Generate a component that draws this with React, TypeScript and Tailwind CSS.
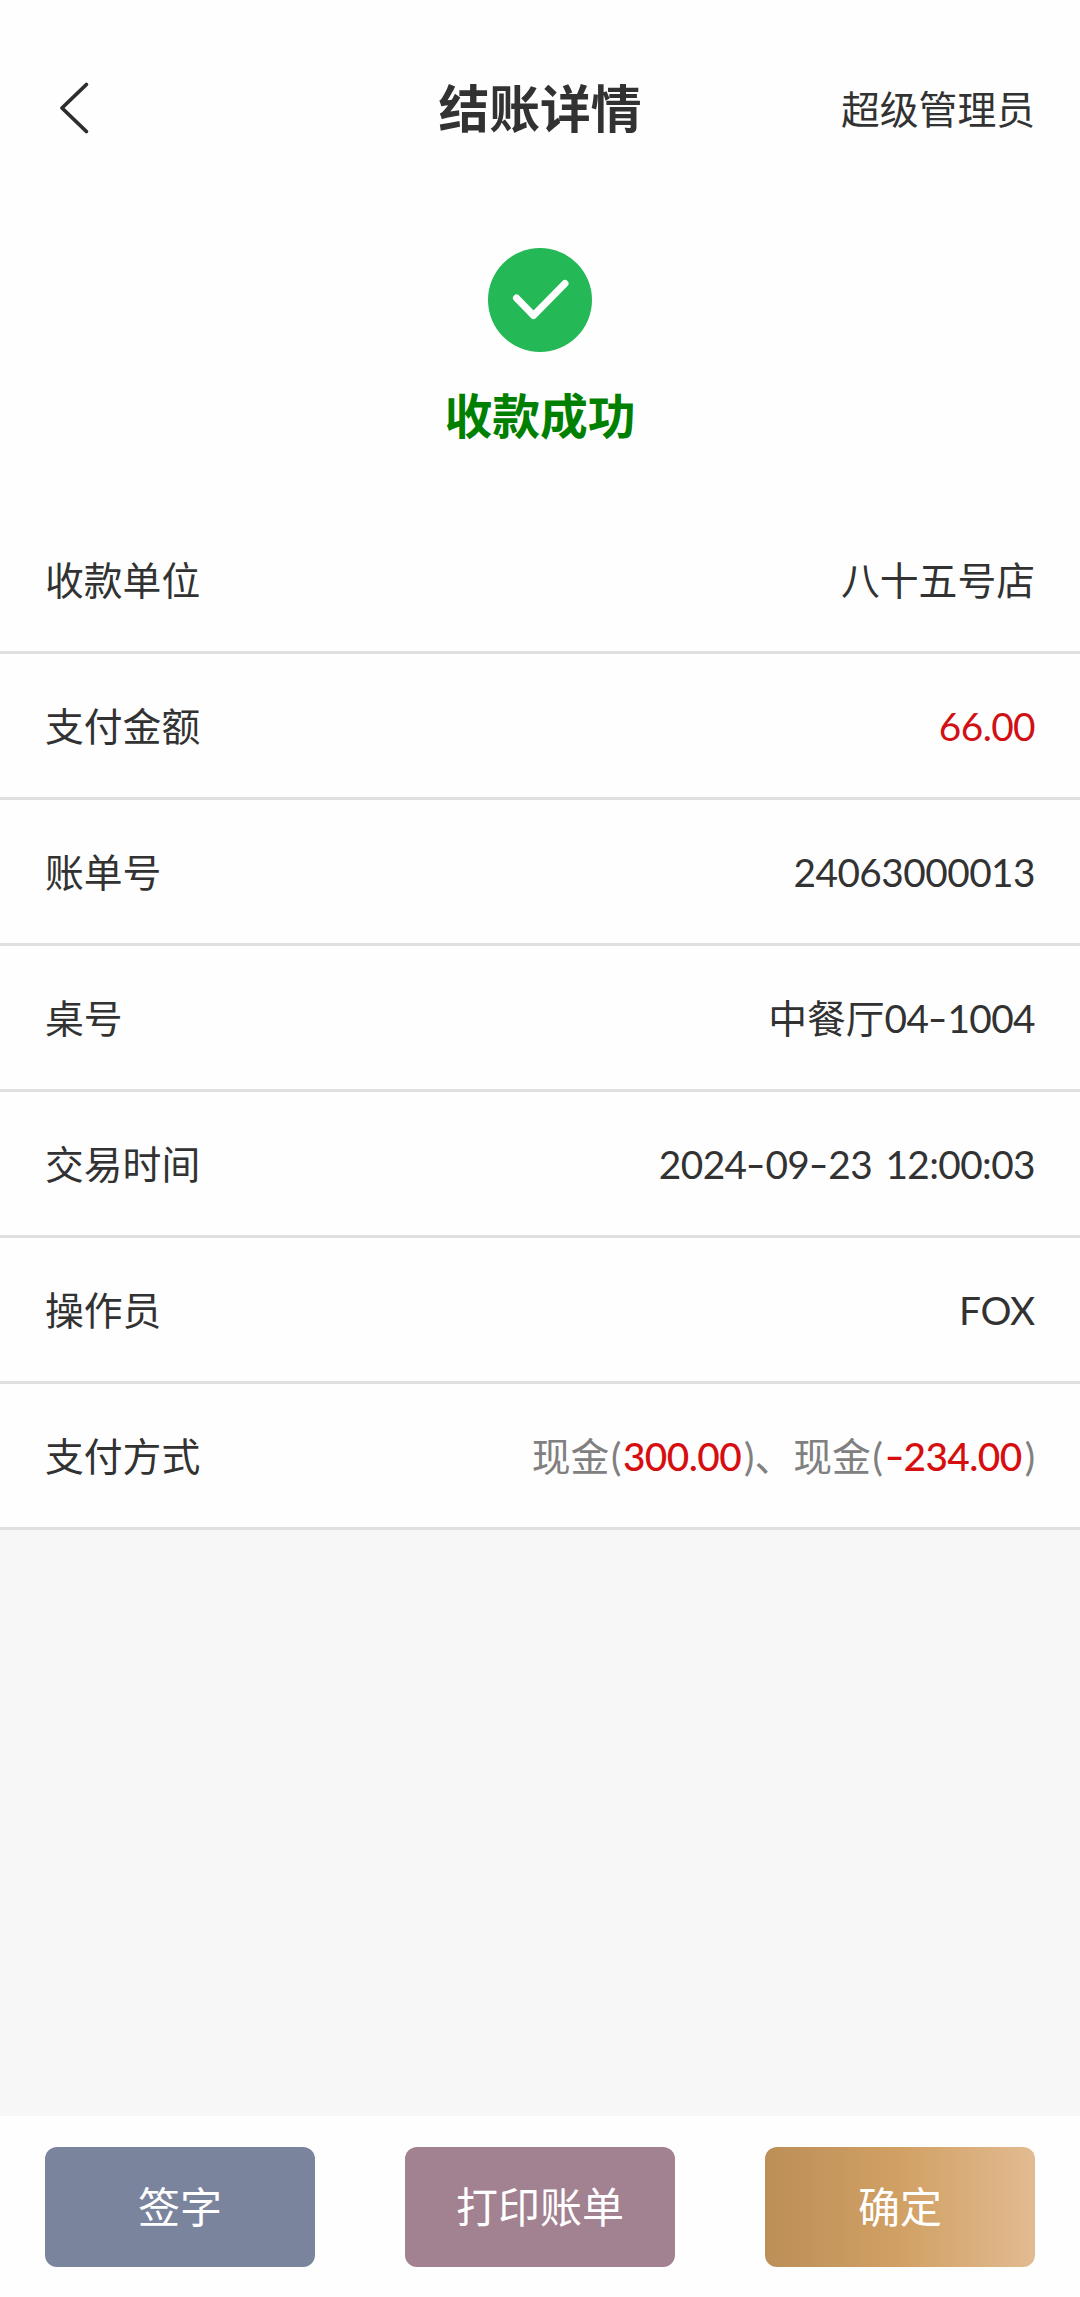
import type { ReactNode } from "react";
import clsx from "clsx";

type Row = {
  label: string;
  value: ReactNode;
  className?: string;
};

// The dash is set wider than the font's own hyphen
function Dash() {
  return <span className="relative -top-px inline-block w-[19px] origin-center scale-x-[1.4] text-center tracking-normal">-</span>;
}

function Payment({ children }: { children: ReactNode }) {
  return (
    <>
      现金<span className="px-[1.7px]">(</span>
      <span className="font-medium tracking-[-0.6px] text-[#d60e10]">{children}</span>
      <span className="pl-[3px]">)</span>
    </>
  );
}

const ROWS: Row[] = [
  { label: "收款单位", value: "八十五号店" },
  { label: "支付金额", value: "66.00", className: "text-[#d01014] tracking-[-0.6px]" },
  { label: "账单号", value: "24063000013", className: "tracking-[-0.55px]" },
  {
    label: "桌号",
    value: (
      <>
        中餐厅
        <span className="tracking-[-0.6px]">
          04
          <Dash />
          1004
        </span>
      </>
    ),
  },
  {
    label: "交易时间",
    value: (
      <>
        2024
        <Dash />
        09
        <Dash />
        23 12:00:03
      </>
    ),
    className: "tracking-[-0.6px] [word-spacing:4px]",
  },
  { label: "操作员", value: "FOX", className: "tracking-[-0.3px]" },
  {
    label: "支付方式",
    value: (
      <>
        <Payment>300.00</Payment>、
        <Payment>
          <Dash />
          234.00
        </Payment>
      </>
    ),
    className: "text-[#808080]",
  },
];

const ACTIONS = [
  { label: "签字", className: "bg-[#7b849d]" },
  { label: "打印账单", className: "bg-[#a28191]" },
  { label: "确定", className: "bg-linear-to-r from-[#bc8f58] via-[#d1a064] to-[#e2bb91]" },
];

function Header() {
  return (
    <header className="grid h-[216px] grid-cols-3 items-center px-[45px]">
      <button type="button" className="justify-self-start" aria-label="返回">
        <svg width="54" height="54" viewBox="0 0 54 54" fill="none" stroke="#2d2d2d" strokeWidth="3.8" strokeLinecap="round" strokeLinejoin="round">
          <path d="M41.4 3.5 17 27l24.4 23.5" />
        </svg>
      </button>
      <h1 className="justify-self-center pt-[3px] text-[50.8px] leading-none font-bold whitespace-nowrap">结账详情</h1>
      <span className="justify-self-end pt-[2px] text-[38.8px] leading-none whitespace-nowrap">超级管理员</span>
    </header>
  );
}

function PaymentStatus() {
  return (
    <section className="flex h-[292px] flex-col items-center pt-8">
      <svg width="104" height="104" viewBox="0 0 104 104" fill="none">
        <circle cx="52" cy="52" r="52" fill="#24b857" />
        <path d="M28.5 50 45.5 67.5 77 35.5" stroke="#fff" strokeWidth="7" strokeLinecap="round" strokeLinejoin="round" />
      </svg>
      <p className="mt-10 text-[47.8px] leading-none font-bold text-[#008000]">收款成功</p>
    </section>
  );
}

export default function App() {
  return (
    <main className="flex h-[2297px] w-[1080px] flex-col bg-[#f7f7f7] font-['Lato','Noto_Sans_CJK_SC',sans-serif] text-[#323232]">
      <div className="bg-[#fefefe]">
        <Header />
        <PaymentStatus />
        <dl>
          {ROWS.map((row) => (
            <div key={row.label} className="flex h-[146px] items-center justify-between border-b-[3px] border-[#e0e0e0] px-[45px] pt-[2px] text-[38.8px] leading-none whitespace-nowrap">
              <dt>{row.label}</dt>
              <dd className={row.className}>{row.value}</dd>
            </div>
          ))}
        </dl>
      </div>
      <footer className="mt-auto flex h-[181px] items-start justify-between bg-[#fefefe] px-[45px] pt-[31px]">
        {ACTIONS.map((action) => (
          <button
            key={action.label}
            type="button"
            className={clsx("h-[120px] w-[270px] rounded-[12px] text-[42px] leading-none text-white", action.className)}
          >
            {action.label}
          </button>
        ))}
      </footer>
    </main>
  );
}
